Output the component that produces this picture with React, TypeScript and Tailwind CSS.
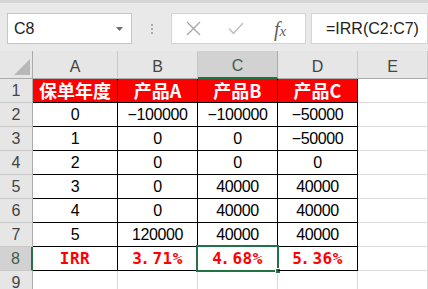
import React from "react";

const cols = ["A", "B", "C", "D", "E"];
const data: string[][] = [
  ["保单年度", "产品A", "产品B", "产品C"],
  ["0", "−100000", "−100000", "−50000"],
  ["1", "0", "0", "−50000"],
  ["2", "0", "0", "0"],
  ["3", "0", "40000", "40000"],
  ["4", "0", "40000", "40000"],
  ["5", "120000", "40000", "40000"],
  ["IRR", "3.71%", "4.68%", "5.36%"],
];

const numFont = { fontFamily: '"Liberation Sans", Arial, sans-serif' };

function Pct({ v }: { v: string }) {
  const [a, b] = v.split(".");
  return (
    <span>
      <span className="tracking-[-1.5px]">{a}</span>
      <span className="tracking-[2.5px]">.</span>
      <span className="tracking-[0.5px]">{b}</span>
    </span>
  );
}

export default function App() {
  return (
    <div className="w-[428px] h-[289px] overflow-hidden bg-white relative">
      {/* formula bar */}
      <div className="h-[51px] bg-[#e9e9e9] border-t-[3px] border-[#d6d6d6] flex items-start pt-[10px]">
        <div className="ml-[7px] w-[125px] h-[31px] bg-white border border-[#c6c6c6] flex items-center justify-between pl-[6px] pr-[8px]">
          <span className="text-[16px] text-[#222]" style={numFont}>C8</span>
          <svg width="7" height="4" viewBox="0 0 7 4"><path d="M0 0 L7 0 L3.5 4 Z" fill="#6b6b6b" /></svg>
        </div>
        <div className="w-[39px] h-[31px] flex flex-col items-center justify-center gap-[2px]">
          <div className="w-[2px] h-[2px] bg-[#a8a8a8]" />
          <div className="w-[2px] h-[2px] bg-[#a8a8a8]" />
          <div className="w-[2px] h-[2px] bg-[#a8a8a8]" />
        </div>
        <div className="w-[135px] h-[31px] bg-white border border-[#d4d4d4] flex items-center">
          <div className="w-[42px] flex justify-center">
            <svg width="15" height="15" viewBox="0 0 15 15"><path d="M1 1 L14 14 M14 1 L1 14" stroke="#a6a6a6" strokeWidth="1.3" /></svg>
          </div>
          <div className="w-[44px] flex justify-center">
            <svg width="16" height="13" viewBox="0 0 16 13"><path d="M1 6.5 L5.5 11.5 L15 1" stroke="#bdbdbd" strokeWidth="1.4" fill="none" /></svg>
          </div>
          <div className="w-[44px] flex justify-center items-center text-[#5f5f5f]" style={{ fontFamily: '"Liberation Serif", serif' }}>
            <span className="italic text-[20px] leading-none">f</span>
            <span className="italic text-[15px] leading-none mt-[5px]">x</span>
          </div>
        </div>
        <div className="ml-[5px] flex-1 h-[31px] bg-white border border-[#d4d4d4] flex items-center pl-[14px]">
          <span className="text-[16px] text-[#222]" style={numFont}>=IRR(C2:C7)</span>
        </div>
      </div>

      {/* grid */}
      <div className="grid grid-cols-[33px_85px_80px_80px_80px_1fr] grid-rows-[28px_repeat(9,24px)]">
        <div className="bg-[#e6e6e6] border-r border-b border-[#ababab] flex items-end justify-end pr-[2px] pb-[3px]">
          <svg width="16" height="16" viewBox="0 0 16 16"><path d="M16 0 L16 16 L0 16 Z" fill="#b8b8b8" /></svg>
        </div>
        {cols.map((c) => (
          <div
            key={c}
            className={
              c === "C"
                ? "bg-[#d2d2d2] border-r border-r-[#ababab] border-b-2 border-b-[#217346] flex items-center justify-center pt-[3px] text-[16px] text-[#3f5d4c]"
                : "bg-[#e6e6e6] border-r border-r-[#c8c8c8] border-b border-b-[#ababab] flex items-center justify-center pt-[4px] text-[16px] text-[#444]"
            }
            style={numFont}
          >
            {c}
          </div>
        ))}
        {Array.from({ length: 9 }).map((_, r) => {
          const row = r + 1;
          const rowData = data[r];
          return (
            <React.Fragment key={row}>
              <div
                className={
                  row === 8
                    ? "bg-[#d2d2d2] border-r-2 border-r-[#217346] border-b border-b-[#c8c8c8] flex items-center justify-center text-[16px] text-[#3f5d4c]"
                    : "bg-[#e6e6e6] border-r border-r-[#ababab] border-b border-b-[#c8c8c8] flex items-center justify-center text-[16px] text-[#444]"
                }
                style={numFont}
              >
                {row}
              </div>
              {[0, 1, 2, 3].map((ci) => {
                if (!rowData) {
                  return <div key={ci} className="border-r border-b border-[#d9d9d9]" />;
                }
                const v = rowData[ci];
                if (row === 1) {
                  return (
                    <div
                      key={ci}
                      className="bg-[#ff0000] border-r border-b border-black flex items-center justify-center text-white font-bold text-[18px]"
                      style={{ fontFamily: '"Noto Sans CJK SC", "Noto Sans", sans-serif' }}
                    >
                      {v}
                    </div>
                  );
                }
                if (row === 8) {
                  const sel = ci === 2;
                  return (
                    <div
                      key={ci}
                      className="relative border-r border-b border-black flex items-center justify-center text-[#ff0000] font-bold text-[16px]"
                      style={{ fontFamily: '"DejaVu Sans Mono", monospace' }}
                    >
                      {ci === 0 ? <span className="tracking-[0.5px]">{v}</span> : <Pct v={v} />}
                      {sel && (
                        <>
                          <div className="absolute left-[-2px] top-[-2px] right-[-2px] bottom-[-2px] border-2 border-[#217346]" />
                          <div className="absolute right-[-4px] bottom-[-4px] w-[6px] h-[6px] bg-[#217346] border border-white" />
                        </>
                      )}
                    </div>
                  );
                }
                return (
                  <div
                    key={ci}
                    className="border-r border-b border-black flex items-center justify-center text-[16px] text-black tracking-[-0.4px]"
                    style={numFont}
                  >
                    {v}
                  </div>
                );
              })}
              <div className="border-r border-b border-[#d9d9d9]" />
            </React.Fragment>
          );
        })}
      </div>
    </div>
  );
}
